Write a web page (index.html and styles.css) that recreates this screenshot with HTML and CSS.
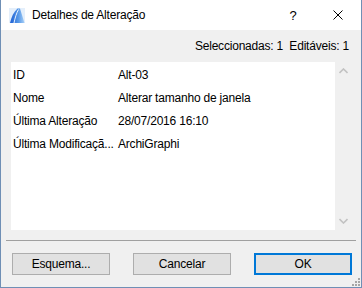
FILE: index.html
```html
<!DOCTYPE html>
<html>
<head>
<meta charset="utf-8">
<link rel="stylesheet" href="styles.css">
</head>
<body>
<div class="window">
  <div class="titlebar">
    <svg class="appicon" width="16" height="15" viewBox="0 0 16 15">
      <defs>
        <linearGradient id="g1" x1="0" y1="0" x2="1" y2="0">
          <stop offset="0" stop-color="#1c5fd4"/>
          <stop offset="0.6" stop-color="#5a9be8"/>
          <stop offset="1" stop-color="#a9d0f7"/>
        </linearGradient>
      </defs>
      <rect x="0" y="0" width="16" height="15" fill="#e4effb"/>
      <path d="M1 15 C2.5 9 4.5 4 8.5 0.5 L11 0.5 L15.5 15 Z" fill="url(#g1)"/>
      <path d="M5 15 C6 10 7.5 5 9.5 1.5" stroke="#eaf3fd" stroke-width="1" fill="none"/>
    </svg>
    <span class="title">Detalhes de Alteração</span>
    <span class="tb-btn help">?</span>
    <span class="tb-btn close">
      <svg width="10" height="10" viewBox="0 0 10 10"><path d="M0.5 0.5 L9.5 9.5 M9.5 0.5 L0.5 9.5" stroke="#000" stroke-width="1"/></svg>
    </span>
  </div>
  <div class="body">
    <div class="status">Seleccionadas: 1&nbsp;&nbsp;Editáveis: 1</div>
    <div class="listbox">
      <div class="list">
        <div class="row"><span class="key">ID</span><span class="val">Alt-03</span></div>
        <div class="row"><span class="key">Nome</span><span class="val">Alterar tamanho de janela</span></div>
        <div class="row"><span class="key">Última Alteração</span><span class="val">28/07/2016 16:10</span></div>
        <div class="row"><span class="key">Última Modificaçã...</span><span class="val">ArchiGraphi</span></div>
      </div>
      <div class="scrollbar">
        <svg width="9" height="6" viewBox="0 0 9 6"><path d="M0.5 5 L4.5 1 L8.5 5" stroke="#c2c2c2" stroke-width="1.6" fill="none"/></svg>
        <svg width="9" height="6" viewBox="0 0 9 6"><path d="M0.5 1 L4.5 5 L8.5 1" stroke="#c2c2c2" stroke-width="1.6" fill="none"/></svg>
      </div>
    </div>
    <div class="separator"></div>
    <div class="buttons">
      <button class="btn">Esquema...</button>
      <button class="btn">Cancelar</button>
      <button class="btn default">OK</button>
    </div>
    <div class="grip">
      <svg width="8" height="8" viewBox="0 0 8 8" fill="#a6a6a6">
        <rect x="6" y="0" width="2" height="2"/>
        <rect x="3" y="3" width="2" height="2"/><rect x="6" y="3" width="2" height="2"/>
        <rect x="0" y="6" width="2" height="2"/><rect x="3" y="6" width="2" height="2"/><rect x="6" y="6" width="2" height="2"/>
      </svg>
    </div>
  </div>
</div>
</body>
</html>
```

FILE: styles.css
```css
* { box-sizing: border-box; }
html, body { margin: 0; padding: 0; }
body {
  font-family: "Liberation Sans", Arial, sans-serif;
  font-size: 12px;
  letter-spacing: -0.2px;
  color: #000;
  background: #fff;
}
.window {
  width: 362px;
  height: 288px;
  border: 1px solid #6f8fb5;
  border-top: none;
  display: flex;
  flex-direction: column;
}
.titlebar {
  height: 30px;
  background: #fff;
  display: flex;
  align-items: center;
}
.appicon { margin-left: 8px; }
.title {
  margin-left: 7px;
  font-size: 12px;
  flex: 1;
}
.tb-btn {
  height: 30px;
  display: flex;
  align-items: center;
  justify-content: center;
}
.help { font-size: 13px; width: 44px; }
.close { width: 46px; }
.body {
  flex: 1;
  background: #f0f0f0;
  position: relative;
  display: flex;
  flex-direction: column;
  padding: 0 9px 0 10px;
}
.status {
  height: 32px;
  display: flex;
  align-items: center;
  justify-content: flex-end;
  padding-right: 3px;
}
.listbox {
  height: 168px;
  display: flex;
}
.list {
  flex: 1;
  background: #fff;
  padding-top: 1px;
}
.row {
  height: 23px;
  display: flex;
  align-items: center;
  padding-left: 2px;
  white-space: nowrap;
}
.key { width: 105px; }
.scrollbar {
  width: 17px;
  display: flex;
  flex-direction: column;
  justify-content: space-between;
  align-items: center;
  padding: 6px 0 6px;
}
.separator {
  height: 1px;
  background: #a0a0a0;
  margin: 10px -4px 0 -5px;
}
.buttons {
  display: flex;
  justify-content: space-between;
  align-items: center;
  margin-top: 12px;
  padding: 0 0 0 1px;
}
.btn {
  width: 98px;
  height: 22px;
  background: #e1e1e1;
  border: 1px solid #adadad;
  font-family: inherit;
  font-size: 12px;
  letter-spacing: -0.2px;
  color: #000;
  padding: 0;
  margin: 0;
}
.btn.default { border: 2px solid #0078d7; }
.grip {
  position: absolute;
  right: 1px;
  bottom: 1px;
  line-height: 0;
}
```
